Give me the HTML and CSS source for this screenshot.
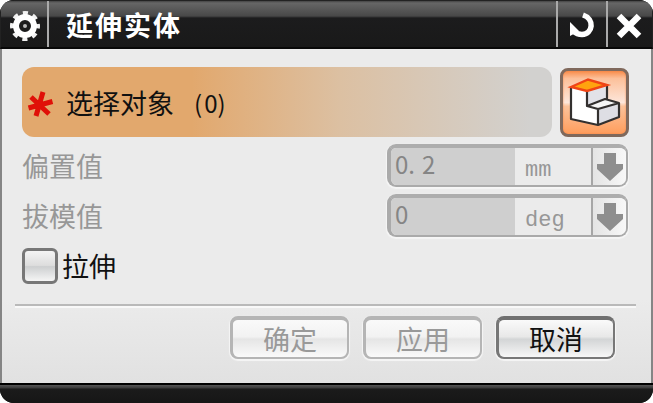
FILE: index.html
```html
<!DOCTYPE html>
<html lang="zh-CN">
<head>
  <meta charset="UTF-8">
  <title>延伸实体</title>
  <link rel="stylesheet" href="styles.css">
</head>
<body>
  <div class="dialog">
    <div class="titlebar">
      <div class="title-icon gear">
        <svg width="32" height="32" viewBox="0 0 32 32">
          <circle cx="16" cy="16" r="13" fill="none" stroke="#f2f2f2" stroke-width="4" stroke-dasharray="5.1 5.11" stroke-dashoffset="2.55"/>
          <circle cx="16" cy="16" r="9" fill="none" stroke="#fff" stroke-width="6"/>
          <circle cx="16" cy="16" r="2" fill="#bbb"/>
        </svg>
      </div>
      <div class="title">延伸实体</div>
      <div class="title-icon reset">
        <svg width="30" height="30" viewBox="0 0 30 30">
          <path d="M16 4C28 8 26 23 15 23.5Q10 23.5 6 20" fill="none" stroke="#fff" stroke-width="5.5"/>
          <path d="M3 11L12 20L3 25Z" fill="#fff"/>
        </svg>
      </div>
      <div class="title-icon close">
        <svg width="30" height="30" viewBox="0 0 30 30">
          <path d="M5 5L25 25M25 5L5 25" stroke="#fff" stroke-width="6.5"/>
        </svg>
      </div>
    </div>

    <div class="content">
      <div class="select-row">
        <div class="select-band">
          <svg class="required" width="28" height="30" viewBox="0 0 28 30">
            <path d="M5 9L23 26M2.5 20L26.5 13.5M17 4L10 28" stroke="#e01008" stroke-width="5"/>
          </svg>
          <span>选择对象</span>
          <span class="count"><span class="paren">(</span>0<span class="paren">)</span></span>
        </div>
        <button class="body-button">
          <svg width="63" height="63" viewBox="0 0 63 63">
            <path d="M8 16L24 20V35L35 38V54L8 48Z" fill="#fff"/>
            <path d="M24 20L44 14V28L24 35Z" fill="#e2e2e8"/>
            <path d="M24 35L42 28L56 32L35 38Z" fill="#f6f6f6"/>
            <path d="M35 38L56 32V46L35 54Z" fill="#dedee4"/>
            <path d="M8 16V48L35 54L56 46V32L35 38V54M24 20V35L35 38M24 35L42 28L56 32M44 14V28" fill="none" stroke="#33302f" stroke-width="2.2" stroke-linejoin="round"/>
            <path d="M8 16L25 8.5L44 14L24 20Z" fill="#ffa30f" stroke="#f04415" stroke-width="2.4"/>
          </svg>
        </button>
      </div>

      <div class="field-row">
        <label>偏置值</label>
        <div class="field">
          <div class="value">0<span class="point">.</span>2</div>
          <div class="unit">mm</div>
          <div class="drop">
            <svg width="28" height="30" viewBox="0 0 28 30"><path d="M8 1H20V12H27V17L14 29L1 17V12H8Z" fill="#8e8e8e"/></svg>
          </div>
        </div>
      </div>
      <div class="field-row">
        <label>拔模值</label>
        <div class="field">
          <div class="value">0</div>
          <div class="unit">deg</div>
          <div class="drop">
            <svg width="28" height="30" viewBox="0 0 28 30"><path d="M8 1H20V12H27V17L14 29L1 17V12H8Z" fill="#8e8e8e"/></svg>
          </div>
        </div>
      </div>

      <div class="check-row">
        <span class="checkbox"></span>
        <span>拉伸</span>
      </div>
      <div class="separator"></div>
      <div class="buttons">
        <button class="btn disabled">确定</button>
        <button class="btn disabled">应用</button>
        <button class="btn">取消</button>
      </div>
    </div>
    <div class="bottombar"></div>
  </div>
</body>
</html>
```
FILE: styles.css
```css
* {
  box-sizing: border-box;
}
body {
  margin: 0;
  background: #fff;
  font-family: "Noto Sans CJK SC", sans-serif;
  font-size: 27px;
  line-height: 36px;
  color: #111;
}
button {
  font: inherit;
  color: inherit;
  padding: 0;
}
svg {
  display: block;
  flex: none;
}
.dialog {
  width: 653px;
  height: 403px;
  display: flex;
  flex-direction: column;
  border-radius: 14px;
  overflow: hidden;
  background: #000;
}
.titlebar {
  height: 49px;
  flex: none;
  display: flex;
  border: 1px solid #222;
  border-bottom: 2px solid #080808;
  background: linear-gradient(#444 0, #666 2px, #484848 15px, #1c1c1d 17px, #191919 100%);
}
.title-icon {
  display: flex;
  align-items: center;
  justify-content: center;
  padding-top: 4px;
}
.gear {
  width: 48px;
  padding-left: 2px;
  border-right: 2px solid #aaa;
}
.reset {
  width: 50px;
  border-left: 2px solid #aaa;
}
.close {
  width: 46px;
  padding-right: 2px;
  border-left: 2px solid #aaa;
}
.title {
  flex: 1;
  padding: 6px 0 0 17px;
  color: #fff;
  font-weight: bold;
  letter-spacing: 2px;
}
.content {
  height: 334px;
  flex: none;
  padding: 18px 22px 0 20px;
  border: solid #858585;
  border-width: 0 2px;
  background: linear-gradient(#ebebeb 75%, #e1e1e1);
}
.select-row {
  display: flex;
  justify-content: space-between;
  height: 70px;
}
.select-band {
  width: 530px;
  display: flex;
  align-items: center;
  padding: 2px 0 0 4px;
  border-radius: 12px;
  background: linear-gradient(90deg, #e2a86d 0, #e2a86d 32%, #dcc0a2 60%, #d2d1cf 96%);
}
.required {
  margin-right: 12px;
}
.count {
  margin-left: 20px;
  font-size: 24px;
}
.paren {
  margin-right: 2px;
}
.body-button {
  width: 69px;
  height: 69px;
  margin-top: 1px;
  display: flex;
  align-items: center;
  justify-content: center;
  border: 3px solid #80695c;
  border-radius: 8px;
  background: linear-gradient(#f98c4a 0, #fcc09a 12%, #fde6da 50%, #fbc29b 56%, #ff9d5c 100%);
  box-shadow: inset 0 0 2px #f28345;
}
.field-row {
  display: flex;
  justify-content: space-between;
  height: 43px;
  margin-top: 7px;
  color: #979797;
}
.field-row label {
  padding-top: 4px;
}
.field {
  width: 241px;
  margin-right: 1px;
  display: flex;
  border: 2px solid #aaa;
  border-top: 4px solid #adadad;
  border-left-width: 4px;
  border-radius: 9px;
  background: #ebebeb;
  box-shadow: 0 1px 1px 1px #f6f6f6;
  overflow: hidden;
}
.value {
  width: 124px;
  padding-left: 4px;
  font-size: 24px;
  line-height: 32px;
  background: #cfcfcf;
  color: #858585;
}
.point {
  margin-right: 7px;
}
.unit {
  width: 76px;
  padding: 5px 0 0 10px;
  font-family: "Liberation Mono", monospace;
  font-size: 22px;
  line-height: 36px;
}
.drop {
  flex: 1;
  display: flex;
  align-items: center;
  justify-content: center;
  border-left: 2px solid #a6a6a6;
  background: linear-gradient(90deg, #e4e4e4, #f8f8f8);
}
.check-row {
  display: flex;
  align-items: center;
  height: 37px;
  margin-top: 10px;
}
.checkbox {
  width: 36px;
  height: 36px;
  margin-right: 4px;
  border: 3px solid #777;
  border-radius: 6px;
  background: linear-gradient(#f4f4f4, #ddd 48%, #cdcfd0 52%, #f5f5f5);
}
.separator {
  height: 4px;
  margin: 20px -7px 0 -7px;
  border-top: 2px solid #b9b9b9;
  border-bottom: 2px solid #f8f8f8;
}
.buttons {
  display: flex;
  justify-content: flex-end;
  gap: 14px;
  margin: 8px 14px 0 0;
}
.btn {
  width: 119px;
  height: 43px;
  line-height: 36px;
  border: 2px solid #777;
  border-top: 4px solid #707070;
  border-left-width: 3px;
  border-radius: 8px;
  background: linear-gradient(#fafafa, #e8e8e8 45%, #d3d5d6 52%, #f7f7f7);
  box-shadow: 0 1px 1px 1px #f5f5f5;
}
.btn.disabled {
  color: #999;
  border-color: #b5b5b5;
  background: linear-gradient(#fafafa, #f2f2f2 45%, #e5e5e5 52%, #fafafa);
}
.bottombar {
  flex: 1;
  border-top: 2px solid #000;
  background: linear-gradient(#555 0, #3a3a3a 3px, #1b1b1b 4px, #161616 100%);
}
```
